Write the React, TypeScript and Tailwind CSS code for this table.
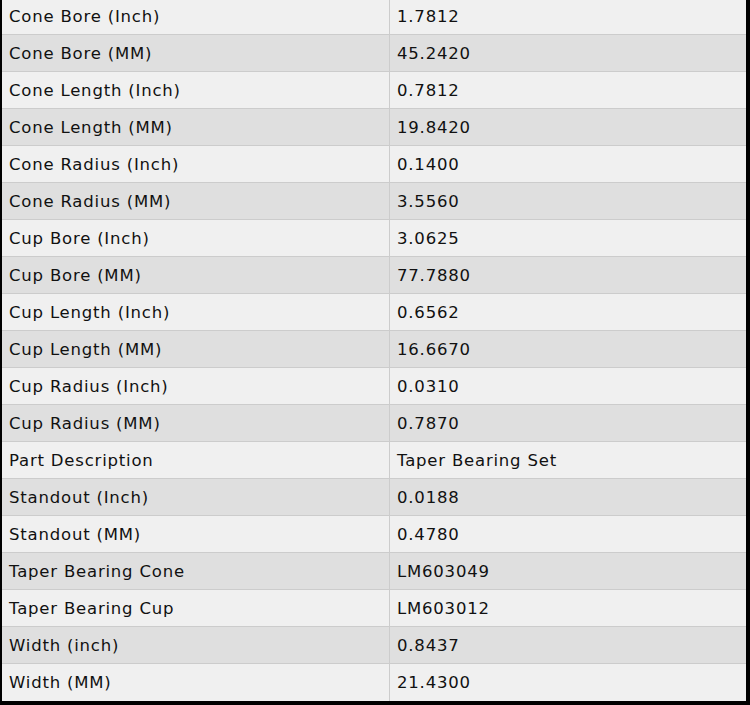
import React from "react";

const rows: [string, string][] = [
  ["Cone Bore (Inch)", "1.7812"],
  ["Cone Bore (MM)", "45.2420"],
  ["Cone Length (Inch)", "0.7812"],
  ["Cone Length (MM)", "19.8420"],
  ["Cone Radius (Inch)", "0.1400"],
  ["Cone Radius (MM)", "3.5560"],
  ["Cup Bore (Inch)", "3.0625"],
  ["Cup Bore (MM)", "77.7880"],
  ["Cup Length (Inch)", "0.6562"],
  ["Cup Length (MM)", "16.6670"],
  ["Cup Radius (Inch)", "0.0310"],
  ["Cup Radius (MM)", "0.7870"],
  ["Part Description", "Taper Bearing Set"],
  ["Standout (Inch)", "0.0188"],
  ["Standout (MM)", "0.4780"],
  ["Taper Bearing Cone", "LM603049"],
  ["Taper Bearing Cup", "LM603012"],
  ["Width (inch)", "0.8437"],
  ["Width (MM)", "21.4300"],
];

export default function App() {
  return (
    <div className="w-[750px] h-[705px] overflow-hidden bg-black">
      <div
        className="ml-[2px] mr-[4px] -mt-[2px] flex flex-col text-[16.5px] tracking-[0.8px] text-[#111]"
        style={{ fontFamily: '"DejaVu Sans", Verdana, sans-serif' }}
      >
        {rows.map(([k, v], i) => (
          <div
            key={k}
            className={`flex h-[37px] ${i % 2 === 0 ? "bg-[#f0f0f0]" : "bg-[#dfdfdf]"} ${i < rows.length - 1 ? "border-b border-[#cccccc]" : ""}`}
          >
            <div className="w-[388px] border-r border-[#cccccc] flex items-center pl-[7px] pt-[2px]">{k}</div>
            <div className="flex-1 flex items-center pl-[7px] pt-[2px]">{v}</div>
          </div>
        ))}
      </div>
    </div>
  );
}
